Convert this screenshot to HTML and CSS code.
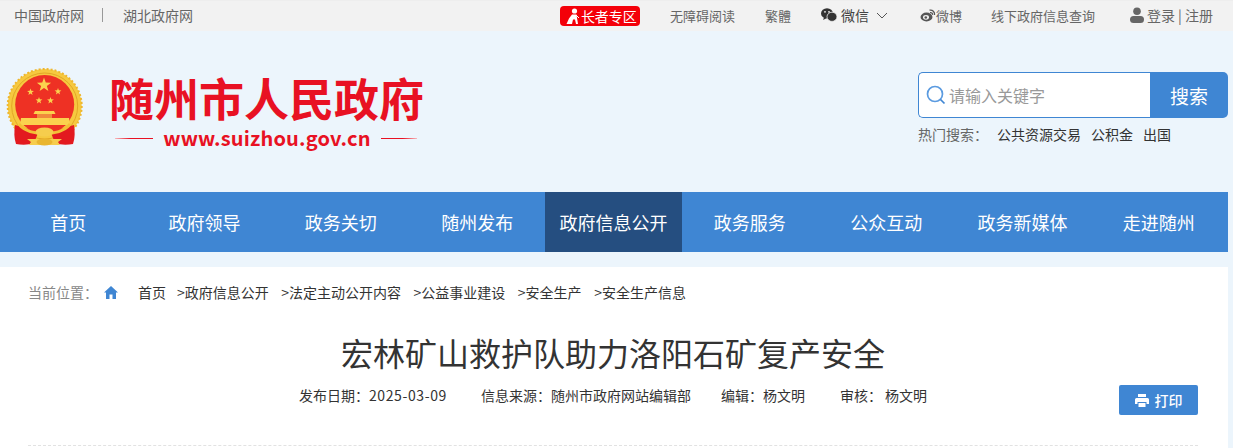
FILE: index.html
```html
<!DOCTYPE html>
<html lang="zh-CN">
<head>
  <meta charset="UTF-8" />
  <title>宏林矿山救护队助力洛阳石矿复产安全</title>
  <link rel="stylesheet" href="styles.css">
</head>
<body>
  <div class="topbar">
    <div class="top-left">
      <a>中国政府网</a>
      <span class="top-sep"></span>
      <a>湖北政府网</a>
    </div>
    <div class="top-right">
      <a class="elder">
        <svg width="15" height="17" viewBox="0 0 15 17"><circle cx="9.500" cy="3" r="2.600" fill="#fff"/><path d="M7 6.500h4.500L13 16h-2l-1-4.500H8L7 16H1.500L4 10.500z" fill="#fff"/><path d="M11 7l3 3" stroke="#fff" stroke-width="1"/></svg>
        长者专区
      </a>
      <a class="t-access">无障碍阅读</a>
      <a class="t-trad">繁體</a>
      <a class="t-wechat">
        <svg width="16" height="14" viewBox="0 0 16 14"><ellipse cx="6" cy="5.400" rx="6" ry="5.200" fill="#333"/><path d="M3 9l-.8 3 3-1.800z" fill="#333"/><ellipse cx="11" cy="8.800" rx="5" ry="4.600" fill="#333" stroke="#f2f2f2" stroke-width=".8"/><circle cx="4" cy="3.800" r=".9" fill="#f2f2f2"/><circle cx="8" cy="3.800" r=".9" fill="#f2f2f2"/></svg>
        <span>微信</span>
        <svg class="chev" width="12" height="7" viewBox="0 0 12 7"><path d="M1 1l5 5 5-5" fill="none" stroke="#555" stroke-width="1"/></svg>
      </a>
      <a class="t-weibo">
        <svg width="16" height="13" viewBox="0 0 16 13"><ellipse cx="6.500" cy="8" rx="6" ry="4.400" fill="#555"/><ellipse cx="6" cy="8.300" rx="3" ry="2.400" fill="#f2f2f2"/><circle cx="5.800" cy="8.500" r="1.300" fill="#555"/><path d="M9.500 1.200c3-.6 5.600 1.600 5 4.800M10 3.600c1.500-.3 2.800.8 2.500 2.300" fill="none" stroke="#555" stroke-width="1.300"/></svg>
        <span>微博</span>
      </a>
      <a class="t-offline">线下政府信息查询</a>
      <a class="t-user">
        <svg width="14" height="16" viewBox="0 0 14 16"><circle cx="7" cy="4.200" r="3.800" fill="#666"/><rect x="0" y="9" width="14" height="7" rx="3.500" fill="#666"/></svg>
        <span>登录 | 注册</span>
      </a>
    </div>
  </div>

  <header class="masthead">
    <div class="brand">
      <svg class="emblem" width="80" height="80" viewBox="0 0 80 80">
        <defs>
          <polygon id="star" points="0,-10 2.350,-3.240 9.510,-3.090 3.800,1.240 5.880,8.090 0,4 -5.880,8.090 -3.800,1.240 -9.510,-3.090 -2.350,-3.240" fill="#fbd24e"/>
        </defs>
        <circle cx="38.700" cy="38" r="37" fill="#f6c93f" stroke="#eeb62e" stroke-width="2" stroke-dasharray="2 2"/>
        <circle cx="38.700" cy="38" r="33" fill="none" stroke="#e3a726" stroke-width="1"/>
        <circle cx="38.700" cy="36.500" r="29.500" fill="#ee3124"/>
        <use href="#star" transform="translate(38 17) scale(.75)"/>
        <use href="#star" transform="translate(24.500 24) scale(.36)"/>
        <use href="#star" transform="translate(52 23.500) scale(.36)"/>
        <use href="#star" transform="translate(33 32.500) scale(.36)"/>
        <use href="#star" transform="translate(44.500 32.500) scale(.36)"/>
        <path d="M29 43h19l1.500 3h-22z" fill="#fbd24e"/>
        <path d="M31 46h15v4H31z" fill="#f08a3c"/>
        <path d="M15 50h48l1 7H14z" fill="#fbd24e"/>
        <path d="M9 57c-1 7-1 13 1 19 6 1 13 1 18-1l4-10-12-5z" fill="#e3191f"/>
        <path d="M68 57c1 7 1 13-1 19-6 1-13 1-18-1l-4-10 12-5z" fill="#e3191f"/>
        <path d="M14 55c6 7 15 9 24.700 9s18.300-2 24.300-9l2 2.500c-6 7-16 9.500-26.300 9.500S18 64.500 12 57.500z" fill="#f3bf36"/>
        <ellipse cx="38.500" cy="64" rx="9" ry="4.500" fill="#f6cd4d"/>
        <path d="M21 71h35l-4 3 2 3H23l2-3z" fill="#f6cd4d"/>
        <ellipse cx="38.500" cy="74" rx="8" ry="3.500" fill="#e9b52f"/>
      </svg>
      <div class="brand-text">
        <div class="brand-name">随州市人民政府</div>
        <div class="brand-url">
          <span class="url-line"></span>
          <span>www.suizhou.gov.cn</span>
          <span class="url-line url-line-r"></span>
        </div>
      </div>
    </div>
    <div class="search">
      <div class="search-row">
        <div class="search-box">
          <svg width="20" height="20" viewBox="0 0 20 20"><circle cx="9" cy="9" r="7.500" fill="none" stroke="#5b9be0" stroke-width="1.700"/><path d="M14.500 14.500l4 4" stroke="#3f86d3" stroke-width="1.700"/></svg>
          <span>请输入关键字</span>
        </div>
        <button class="search-btn">搜索</button>
      </div>
      <div class="hot">
        <span class="hot-label">热门搜索：</span>
        <a>公共资源交易</a>
        <a>公积金</a>
        <a>出国</a>
      </div>
    </div>
  </header>

  <nav class="mainnav">
    <a>首页</a>
    <a>政府领导</a>
    <a>政务关切</a>
    <a>随州发布</a>
    <a class="active">政府信息公开</a>
    <a>政务服务</a>
    <a>公众互动</a>
    <a>政务新媒体</a>
    <a>走进随州</a>
  </nav>

  <main class="article">
    <div class="crumbs">
      <span class="crumb-label">当前位置：</span>
      <svg class="crumb-home" width="14" height="13" viewBox="0 0 14 13"><path d="M7 0L0 6.500h2V13h3.500V8.500h3V13H12V6.500h2z" fill="#3f86d3"/></svg>
      <a class="crumb-first">首页</a>
      <a>&gt;政府信息公开</a>
      <a>&gt;法定主动公开内容</a>
      <a>&gt;公益事业建设</a>
      <a>&gt;安全生产</a>
      <a>&gt;安全生产信息</a>
    </div>
    <h1>宏林矿山救护队助力洛阳石矿复产安全</h1>
    <div class="meta-row">
      <div class="meta">
        <span>发布日期：<span class="m-date">2025-03-09</span></span>
        <span>信息来源：随州市政府网站编辑部</span>
        <span>编辑：杨文明</span>
        <span class="m-audit">审核：&nbsp;杨文明</span>
      </div>
      <button class="print">
        <svg width="14" height="13" viewBox="0 0 14 13"><path d="M3 0h8v3H3zM1.500 4h11A1.500 1.500 0 0 1 14 5.500V10h-2.500V8h-9v2H0V5.500A1.500 1.500 0 0 1 1.500 4zM3.500 9h7v4h-7z" fill="#fff"/></svg>
        打印
      </button>
    </div>
    <div class="divider"></div>
  </main>
</body>
</html>
```

FILE: styles.css
```css
* {
  box-sizing: border-box;
}
html, body {
  height: 448px;
  overflow: hidden;
}
body {
  margin: 0;
  background: #ecf5fc;
  font-family: "Noto Sans CJK SC", "Liberation Sans", sans-serif;
  color: #333;
}
a {
  color: inherit;
  text-decoration: none;
}

/* top bar */
.topbar {
  height: 31px;
  background: #f2f2f2;
  border-top: 1px solid #eee;
  display: flex;
  justify-content: space-between;
  align-items: center;
  padding: 0 20px 2px 14px;
  font-size: 13px;
  color: #666;
}
.top-left {
  display: flex;
  align-items: center;
  font-size: 14px;
}
.top-left a {
  color: #666;
}
.top-sep {
  width: 1px;
  height: 14px;
  background: #999;
  margin: 0 20px 0 18px;
}
.top-right {
  display: flex;
  align-items: center;
}
.top-right a {
  display: flex;
  align-items: center;
}
.elder {
  background: #f40009;
  color: #fff;
  width: 80px;
  height: 20px;
  margin-top: 2px;
  border-radius: 4px;
  padding-left: 5px;
  gap: 1px;
  font-size: 14px;
  margin-right: 30px;
}
.t-trad {
  margin-left: 30px;
}
.t-wechat {
  margin-left: 30px;
  gap: 4px;
  font-size: 14px;
  color: #444;
}
.chev {
  margin-left: 3px;
}
.t-weibo {
  margin-left: 32px;
}
.t-offline {
  margin-left: 29px;
}
.t-user {
  margin-left: 35px;
  gap: 3px;
  font-size: 14px;
}

/* logo and search */
.masthead {
  height: 161px;
  width: 1228px;
  display: flex;
  justify-content: space-between;
  padding-left: 6px;
}
.brand {
  display: flex;
}
.emblem {
  margin-top: 37px;
}
.brand-text {
  margin: 44px 0 0 23px;
  width: 314px;
}
.brand-name {
  font-size: 45px;
  font-weight: 700;
  line-height: 46px;
  color: #e81123;
  white-space: nowrap;
}
.brand-url {
  display: flex;
  align-items: center;
  justify-content: space-between;
  padding: 0 6px;
  font-size: 20px;
  font-weight: 700;
  line-height: 26px;
  letter-spacing: 0.2px;
  color: #e81123;
  margin-top: 4px;
}
.url-line {
  width: 38px;
  height: 1px;
  background: linear-gradient(to right, #f7b9bd, #e81123 40%);
}
.url-line-r {
  width: 36px;
  background: linear-gradient(to left, #f7b9bd, #e81123 40%);
}
.search {
  width: 310px;
  margin-top: 41px;
}
.search-row {
  display: flex;
  height: 46px;
}
.search-box {
  flex: 1;
  display: flex;
  align-items: center;
  gap: 3px;
  padding-left: 7px;
  background: #fff;
  border: 1px solid #3f86d3;
  border-right: 0;
  border-radius: 5px 0 0 5px;
  font-size: 16px;
  color: #999;
}
.search-btn {
  width: 78px;
  border: 0;
  background: #3f86d3;
  color: #fff;
  font: inherit;
  font-size: 19px;
  border-radius: 0 5px 5px 0;
}
.hot {
  display: flex;
  font-size: 14px;
  line-height: 20px;
  margin-top: 6px;
  color: #333;
}
.hot-label {
  color: #666;
  margin-right: 9px;
}
.hot a {
  margin-right: 10px;
}

/* main nav */
.mainnav {
  width: 1228px;
  height: 60px;
  padding-right: 1px;
  background: #3f86d3;
  display: grid;
  grid-template-columns: repeat(9, 1fr);
}
.mainnav a {
  display: flex;
  align-items: center;
  justify-content: center;
  color: #fff;
  font-size: 18px;
}
.mainnav a.active {
  background: #254e80;
}

/* article */
.article {
  width: 1228px;
  height: 181px;
  margin-top: 15px;
  background: #fff;
  padding: 15px 30px 0 28px;
}
.crumbs {
  display: flex;
  align-items: center;
  height: 20px;
  font-size: 14px;
  white-space: nowrap;
}
.crumb-label {
  color: #888;
  margin-right: 6px;
}
.crumb-home {
  margin-right: 20px;
}
.crumbs a {
  margin-right: 12.5px;
}
.crumbs a.crumb-first {
  margin-right: 11px;
}
.article h1 {
  margin: 0;
  padding-top: 27px;
  font-size: 32px;
  font-weight: 400;
  line-height: 46px;
  text-align: center;
  color: #333;
}
.meta-row {
  display: flex;
  height: 30px;
  margin-top: 10px;
  font-size: 14px;
}
.meta {
  display: flex;
  gap: 30px;
  padding-left: 271px;
  line-height: 20px;
  flex: 1;
}
.m-date {
  letter-spacing: 0.6px;
  margin-right: 4px;
}
.m-audit {
  margin-left: 5px;
}
.print {
  width: 79px;
  height: 30px;
  border: 0;
  border-radius: 2px;
  background: #3f86d3;
  color: #fff;
  font: inherit;
  font-size: 14px;
  font-weight: 500;
  display: flex;
  align-items: center;
  justify-content: center;
  gap: 6px;
}
.divider {
  margin-top: 30px;
  border-top: 1px dashed #e2e2e2;
}
```
